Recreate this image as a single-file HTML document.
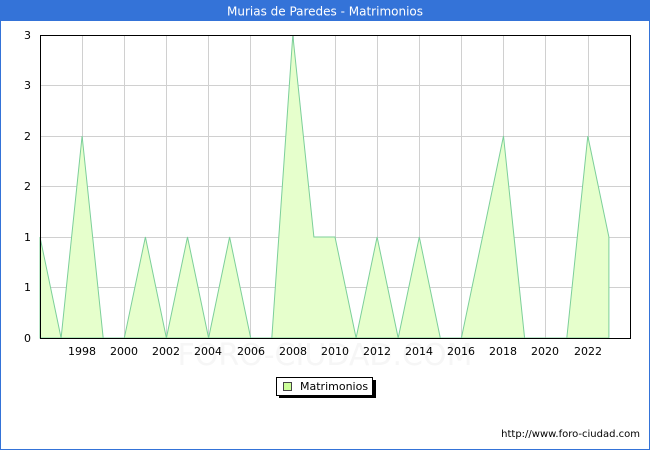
<!DOCTYPE html>
<html><head><style>
body{margin:0;width:650px;height:450px;overflow:hidden;background:#fff;font-family:"DejaVu Sans","Liberation Sans",sans-serif;}
</style></head><body>
<svg width="650" height="450" xmlns="http://www.w3.org/2000/svg" font-family="DejaVu Sans, Liberation Sans, sans-serif">
<rect x="0.5" y="0.5" width="649" height="449" fill="#fff" stroke="#3473d8"/>
<rect x="0" y="0" width="650" height="21" fill="#3473d8"/>
<text x="325" y="15.5" text-anchor="middle" fill="#fff" font-size="12">Murias de Paredes - Matrimonios</text>
<text x="325" y="365" text-anchor="middle" fill="#f6f6f6" font-size="30">FORO-CIUDAD.COM</text>
<g stroke="#d0d0d0" stroke-width="1">
<line x1="40" y1="85.5" x2="630" y2="85.5"/><line x1="40" y1="136.5" x2="630" y2="136.5"/>
<line x1="40" y1="186.5" x2="630" y2="186.5"/><line x1="40" y1="237.5" x2="630" y2="237.5"/>
<line x1="40" y1="287.5" x2="630" y2="287.5"/>
<line x1="82.5" y1="35" x2="82.5" y2="338"/><line x1="124.5" y1="35" x2="124.5" y2="338"/>
<line x1="166.5" y1="35" x2="166.5" y2="338"/><line x1="208.5" y1="35" x2="208.5" y2="338"/>
<line x1="250.5" y1="35" x2="250.5" y2="338"/><line x1="293.5" y1="35" x2="293.5" y2="338"/>
<line x1="335.5" y1="35" x2="335.5" y2="338"/><line x1="377.5" y1="35" x2="377.5" y2="338"/>
<line x1="419.5" y1="35" x2="419.5" y2="338"/><line x1="461.5" y1="35" x2="461.5" y2="338"/>
<line x1="503.5" y1="35" x2="503.5" y2="338"/><line x1="545.5" y1="35" x2="545.5" y2="338"/>
<line x1="588.5" y1="35" x2="588.5" y2="338"/>
</g>
<polygon fill="#e6ffcc" stroke="#7ccf9a" stroke-width="1" points="40,338 40,237 61.1,338 82.1,136 103.2,338 124.3,338 145.4,237 166.4,338 187.5,237 208.6,338 229.6,237 250.7,338 271.8,338 292.8,35 313.9,237 335,237 356.1,338 377.1,237 398.2,338 419.3,237 440.3,338 461.4,338 482.5,237 503.5,136 524.6,338 545.7,338 566.8,338 587.8,136 608.9,237 608.9,338"/>
<rect x="40.5" y="35.5" width="590" height="303" fill="none" stroke="#000"/>
<g font-size="11" fill="#000" text-anchor="end">
<text x="31" y="342">0</text><text x="31" y="291">1</text><text x="31" y="241">1</text>
<text x="31" y="190">2</text><text x="31" y="140">2</text><text x="31" y="89">3</text><text x="31" y="39">3</text>
</g>
<g font-size="11" fill="#000" text-anchor="middle">
<text x="82" y="355">1998</text><text x="124" y="355">2000</text><text x="166" y="355">2002</text>
<text x="208" y="355">2004</text><text x="251" y="355">2006</text><text x="293" y="355">2008</text>
<text x="335" y="355">2010</text><text x="377" y="355">2012</text><text x="419" y="355">2014</text>
<text x="461" y="355">2016</text><text x="503" y="355">2018</text><text x="545" y="355">2020</text>
<text x="588" y="355">2022</text>
</g>
<rect x="279" y="380" width="97" height="18" fill="#000"/>
<rect x="276.5" y="377.5" width="96" height="18" fill="#fff" stroke="#000"/>
<rect x="283.5" y="382.5" width="8" height="8" fill="#ccff99" stroke="#444"/>
<text x="300" y="390" font-size="11" fill="#000">Matrimonios</text>
<text x="640" y="437" text-anchor="end" font-size="10" fill="#000">http://www.foro-ciudad.com</text>
</svg>
</body></html>
